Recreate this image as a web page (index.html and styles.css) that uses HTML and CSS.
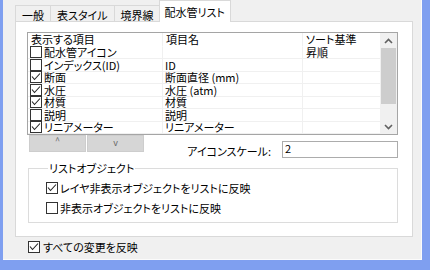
FILE: index.html
```html
<!DOCTYPE html>
<html lang="ja">

<head>
    <meta charset="UTF-8">
    <title>配水管リスト</title>
    <link rel="stylesheet" href="styles.css">
</head>

<body>
    <div class="window">
        <div class="tabs">
            <div class="tab">一般</div>
            <div class="tab">表スタイル</div>
            <div class="tab">境界線</div>
            <div class="tab active">配水管リスト</div>
        </div>

        <div class="page">
            <div class="list">
                <div class="grid">
                    <div class="cell head">表示する項目</div>
                    <div class="cell head">項目名</div>
                    <div class="cell head">ソート基準</div>

                    <div class="cell"><svg class="cb" width="12" height="12"><rect x=".5" y=".5" width="11" height="11"/></svg>配水管アイコン</div>
                    <div class="cell"></div>
                    <div class="cell">昇順</div>

                    <div class="cell"><svg class="cb" width="12" height="12"><rect x=".5" y=".5" width="11" height="11"/></svg>インデックス(ID)</div>
                    <div class="cell">ID</div>
                    <div class="cell"></div>

                    <div class="cell"><svg class="cb" width="12" height="12"><rect x=".5" y=".5" width="11" height="11"/><path d="M2 5.5l2.5 3L10 2.5"/></svg>断面</div>
                    <div class="cell">断面直径 (mm)</div>
                    <div class="cell"></div>

                    <div class="cell"><svg class="cb" width="12" height="12"><rect x=".5" y=".5" width="11" height="11"/><path d="M2 5.5l2.5 3L10 2.5"/></svg>水圧</div>
                    <div class="cell">水圧 (atm)</div>
                    <div class="cell"></div>

                    <div class="cell"><svg class="cb" width="12" height="12"><rect x=".5" y=".5" width="11" height="11"/><path d="M2 5.5l2.5 3L10 2.5"/></svg>材質</div>
                    <div class="cell">材質</div>
                    <div class="cell"></div>

                    <div class="cell"><svg class="cb" width="12" height="12"><rect x=".5" y=".5" width="11" height="11"/></svg>説明</div>
                    <div class="cell">説明</div>
                    <div class="cell"></div>

                    <div class="cell"><svg class="cb" width="12" height="12"><rect x=".5" y=".5" width="11" height="11"/><path d="M2 5.5l2.5 3L10 2.5"/></svg>リニアメーター</div>
                    <div class="cell">リニアメーター</div>
                    <div class="cell"></div>
                </div>

                <div class="scrollbar">
                    <div class="arrow"><svg width="9" height="6"><path d="M1 5l3.5-3.5L8 5"/></svg></div>
                    <div class="thumb"></div>
                    <div class="track"></div>
                    <div class="arrow"><svg width="9" height="6"><path d="M1 1l3.5 3.5L8 1"/></svg></div>
                </div>
            </div>

            <div class="controls">
                <div class="move">
                    <div class="move-btn up">^</div>
                    <div class="move-btn">v</div>
                </div>
                <div class="scale">
                    <span>アイコンスケール:</span>
                    <div class="input">2</div>
                </div>
            </div>

            <fieldset class="group">
                <legend>リストオブジェクト</legend>
                <div class="check"><svg class="cb" width="12" height="12"><rect x=".5" y=".5" width="11" height="11"/><path d="M2 5.5l2.5 3L10 2.5"/></svg>レイヤ非表示オブジェクトをリストに反映</div>
                <div class="check"><svg class="cb" width="12" height="12"><rect x=".5" y=".5" width="11" height="11"/></svg>非表示オブジェクトをリストに反映</div>
            </fieldset>
        </div>

        <div class="check apply"><svg class="cb" width="12" height="12"><rect x=".5" y=".5" width="11" height="11"/><path d="M2 5.5l2.5 3L10 2.5"/></svg>すべての変更を反映</div>
    </div>
</body>

</html>
```

FILE: styles.css
```css
* {
    margin: 0;
    padding: 0;
    box-sizing: border-box;
}

body {
    width: 430px;
    height: 270px;
    overflow: hidden;
    background: #7f9ff0;
    color: #000;
    font-family: "Noto Sans CJK JP", "Noto Sans", sans-serif;
    font-size: 11px;
    line-height: 14px;
    font-feature-settings: "palt";
}

.window {
    margin-left: 3px;
    width: 419px;
    height: 260px;
    background: #f0f0f0;
    border-right: 1px solid #fbfbfb;
    border-bottom: 1px solid #fbfbfb;
    padding-left: 12px;
}

/* tabs */
.tabs {
    display: flex;
    align-items: flex-end;
    height: 21px;
}

.tab {
    height: 16px;
    padding: 2px 6px 0;
    border: 1px solid #d9d9d9;
    border-bottom: none;
    margin-right: -1px;
    background: #f0f0f0;
}

.tab.active {
    position: relative;
    z-index: 1;
    height: 22px;
    margin-bottom: -1px;
    margin-left: -1px;
    padding: 4px 5px 0;
    background: #fff;
}

/* tab page */
.page {
    width: 398px;
    height: 216px;
    background: #fff;
    border: 1px solid #d9d9d9;
    padding: 10px 14px 0 11px;
}

.list {
    display: flex;
    height: 103px;
    border: 1px solid #a5a5a5;
}

.grid {
    display: grid;
    grid-template-columns: 135px 140px 77px;
    grid-template-rows: 13.5px repeat(7, 12.5px);
}

.cell {
    display: flex;
    align-items: center;
    gap: 2px;
    padding-left: 2px;
    line-height: 12px;
    white-space: nowrap;
    border-right: 1px solid #f0f0f0;
    border-bottom: 1px solid #f0f0f0;
}

.cell:nth-child(3n) {
    padding-left: 3px;
    border-right: none;
}

.grid .cell:nth-child(-n+3) {
    border-bottom-color: transparent;
}

.cell.head {
    padding-left: 3px;
}

.cb {
    flex: none;
    fill: #fff;
    stroke: #333;
    stroke-width: 1;
}

.cb path {
    fill: none;
    stroke: #222;
    stroke-width: 1.1;
}

.scrollbar {
    width: 17px;
    display: flex;
    flex-direction: column;
    background: #f0f0f0;
}

.arrow {
    height: 15px;
    display: flex;
    align-items: center;
    justify-content: center;
}

.arrow path {
    fill: none;
    stroke: #606060;
    stroke-width: 1.6;
}

.thumb {
    height: 56px;
    margin: 0 1px;
    background: #cdcdcd;
}

.track {
    flex: 1;
}

/* move buttons + scale */
.controls {
    display: flex;
    align-items: flex-start;
    height: 23px;
}

.move {
    display: flex;
    gap: 1px;
    margin-left: 2px;
}

.move-btn {
    width: 57px;
    height: 17px;
    background: #d6d6d6;
    border: 1px solid #cdcdcd;
    color: #6a6a6a;
    font-size: 9px;
    line-height: 13px;
    text-align: center;
}

.move-btn.up {
    line-height: 9px;
}

.scale {
    display: flex;
    align-items: center;
    gap: 11px;
    margin-left: auto;
    margin-top: 6px;
}

.scale span {
    padding-top: 2px;
}

.input {
    width: 116px;
    height: 17px;
    border: 1px solid #acacac;
    padding-left: 2px;
    line-height: 13px;
}

/* group box */
.group {
    margin: 3px 0 0 1px;
    width: 370px;
    height: 62px;
    border: 1px solid #dcdcdc;
    padding: 6px 0 0 17px;
}

.group legend {
    margin-left: 2px;
    padding: 0 1px;
}

.check {
    display: flex;
    align-items: center;
    gap: 2px;
    height: 14px;
    margin-bottom: 6px;
}

.apply {
    margin: 3px 0 0 13px;
    gap: 3px;
}
```
